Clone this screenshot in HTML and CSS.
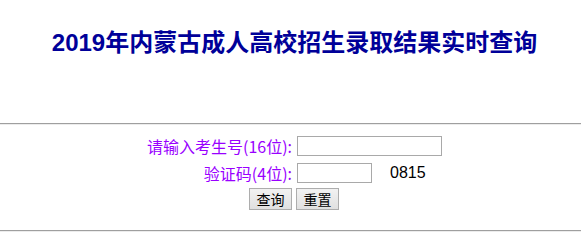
FILE: index.html
```html
<!DOCTYPE html>
<html lang="zh-CN">
<head>
<meta charset="utf-8">
<title>2019年内蒙古成人高校招生录取结果实时查询</title>
<link rel="stylesheet" href="styles.css">
</head>
<body>
<div class="header">
  <h1 class="title">2019年内蒙古成人高校招生录取结果实时查询</h1>
</div>
<div class="rule"></div>
<form class="query" onsubmit="return false;">
  <div class="grid">
    <label class="label" for="ksh">请输入考生号(16位):</label>
    <div class="field"><input class="input input-long" id="ksh" type="text"></div>
    <label class="label" for="yzm">验证码(4位):</label>
    <div class="field"><input class="input input-short" id="yzm" type="text"><span class="code">0815</span></div>
    <div class="actions">
      <button class="btn" type="submit">查询</button>
      <button class="btn" type="reset">重置</button>
    </div>
  </div>
</form>
<div class="rule"></div>
</body>
</html>
```

FILE: styles.css
```css
html, body {
  margin: 0;
  padding: 0;
  background: #ffffff;
}
body {
  font-family: "Noto Sans CJK SC", "Liberation Sans", sans-serif;
}
.header {
  padding-top: 28px;
  padding-left: 8px;
  height: 95px;
  box-sizing: border-box;
}
.title {
  margin: 0;
  text-align: center;
  font-size: 24px;
  line-height: 30px;
  font-weight: bold;
  color: #000099;
  font-family: "Liberation Sans", "Noto Sans CJK SC", sans-serif;
}
.rule {
  height: 0;
  border-top: 1px solid #9f9f9f;
  border-bottom: 1px solid #ececec;
}
.header + .rule {
  margin-top: 28px;
}
.query {
  margin: 0;
  padding: 11px 0 20px;
}
.grid {
  display: grid;
  grid-template-columns: 160px 150px;
  column-gap: 3px;
  justify-content: center;
}
.label {
  text-align: right;
  padding-right: 2px;
  font-size: 16px;
  line-height: 20px;
  color: #9900ff;
  white-space: nowrap;
}
.field {
  display: flex;
  align-items: center;
  height: 20px;
}
.grid > .label:nth-of-type(2),
.grid > .label:nth-of-type(2) + .field {
  margin-top: 7px;
}
.input {
  box-sizing: border-box;
  height: 20px;
  margin: 0;
  padding: 0 2px;
  border: 1px solid #a9a9a9;
  background: #fff;
  font-size: 13px;
}
.input-long { width: 145px; }
.input-short { width: 75px; }
.code {
  margin-left: 18px;
  font-size: 16px;
  line-height: 20px;
  color: #000;
  font-family: "Liberation Sans", sans-serif;
}
.actions {
  grid-column: 1 / 3;
  display: flex;
  justify-content: center;
  gap: 4px;
  margin-top: 5px;
  padding-left: 7px;
}
.btn {
  box-sizing: border-box;
  width: 43px;
  height: 22px;
  margin: 0;
  padding: 0;
  border: 1px solid #adadad;
  border-radius: 0;
  background: linear-gradient(#f2f2f2, #e0e0e0);
  font-family: "Noto Sans CJK SC", sans-serif;
  font-size: 14px;
  line-height: 20px;
  color: #000;
}
```
